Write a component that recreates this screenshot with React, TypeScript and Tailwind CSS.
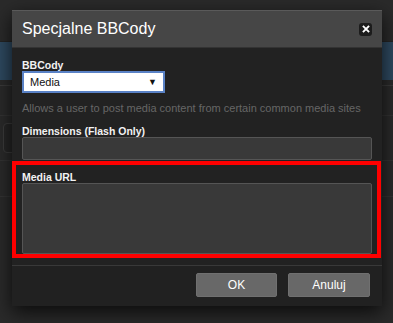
import React from 'react';

const font = { fontFamily: '"Liberation Sans", Arial, sans-serif' };

export default function App() {
  return (
    <div
      className="relative h-[323px] w-[393px] overflow-hidden bg-[#2a2a2a]"
      style={font}
    >
      {/* page behind the modal */}
      <div className="flex flex-col">
        <div className="h-[42px] border-b border-[#242424]" />
        <div className="h-[38px] bg-[#2e4960]" />
        <div className="h-[6px] border-b border-[#3a3a3a]" />
        <div className="h-[30px] border-b border-[#333]" />
        <div className="flex h-[45px] items-center border-b border-[#333] pl-[3px]">
          <div className="h-[30px] w-[14px] rounded border border-[#3c3c3c] bg-[#262626]" />
        </div>
        <div className="h-[36px] border-b border-[#333]" />
      </div>

      {/* modal */}
      <div className="absolute left-[12px] top-[10px] flex w-[370px] flex-col bg-[#222] shadow-[0_6px_18px_rgba(0,0,0,0.75)]">
        <div className="flex h-[38px] items-center justify-between border-t border-[#5a5a5a] border-b border-b-[#333] bg-[#464646] pl-[10px] pr-[10px]">
          <h1 className="text-[16px] leading-none text-white">Specjalne BBCody</h1>
          <button className="flex h-[13px] w-[13px] items-center justify-center rounded-[3px] bg-[#1c1c1c]">
            <svg viewBox="0 0 10 10" className="h-[8px] w-[8px]">
              <path d="M2 2 L8 8 M8 2 L2 8" stroke="white" strokeWidth="2.4" strokeLinecap="square" />
            </svg>
          </button>
        </div>

        <div className="flex flex-col px-[10px] pb-[11px] pt-[11px] text-[10.5px] leading-[12px]">
          <label className="font-bold text-[#f2f2f2]">BBCody</label>
          <div className="flex h-[22px] w-[143px] items-center justify-between border-2 border-[#5a82c6] bg-white pl-[6px] pr-[6px] text-[11px] text-[#111]">
            <span>Media</span>
            <span className="text-[9px] leading-none">▼</span>
          </div>
          <p className="mt-[9px] text-[11px] text-[#666]">
            Allows a user to post media content from certain common media sites
          </p>

          <label className="mt-[11px] font-bold text-[#f2f2f2]">Dimensions (Flash Only)</label>
          <div className="h-[23px] rounded-[2px] border border-[#555] bg-[#393939]" />

          <label className="mt-[11px] font-bold text-[#f2f2f2]">Media URL</label>
          <div className="h-[71px] rounded-[2px] border border-[#555] bg-[#393939]" />
        </div>

        <div className="flex justify-end gap-[11px] border-t border-[#393939] bg-[#212121] pb-[9px] pr-[12px] pt-[7px]">
          <button className="h-[24px] w-[81px] rounded-[2px] border border-[#707070] bg-[#686868] text-[12px] text-white">
            OK
          </button>
          <button className="h-[24px] w-[82px] rounded-[2px] border border-[#707070] bg-[#686868] text-[12px] text-white">
            Anuluj
          </button>
        </div>

        {/* annotation box */}
        <div className="pointer-events-none absolute left-0 top-[151px] h-[97px] w-[369px] border-[4px] border-[#ff0000]" />
      </div>
    </div>
  );
}
